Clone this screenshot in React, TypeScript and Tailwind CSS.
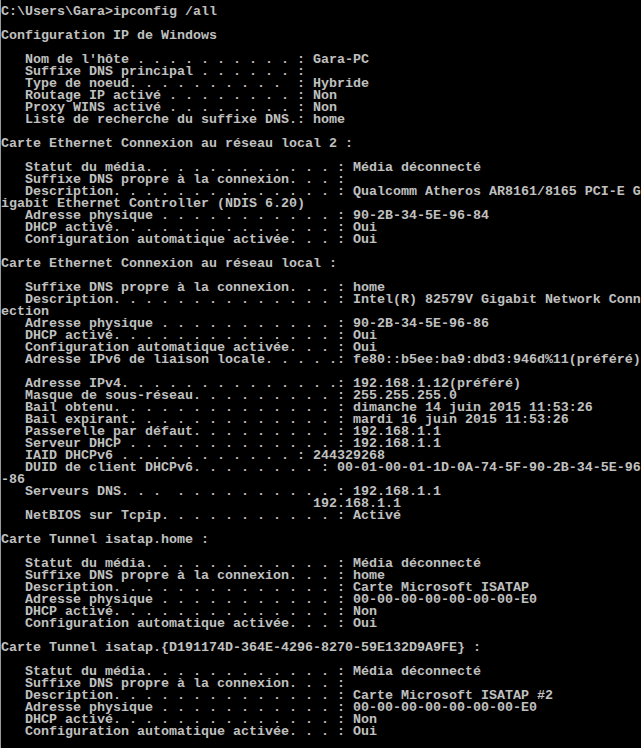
import React from "react";

function lead(label: string, colonCol: number, value: string, dotParity: 0 | 1): string {
  let s = "   " + label;
  while (s.length < colonCol) {
    s += s.length % 2 === dotParity ? "." : " ";
  }
  return s + ": " + value;
}

const S = (l: string, v: string) => lead(l, 42, v, 0);

const lines: string[] = [
  "C:\\Users\\Gara>ipconfig /all",
  "",
  "Configuration IP de Windows",
  "",
  "   Nom de l'hôte . . . . . . . . . . : Gara-PC",
  "   Suffixe DNS principal . . . . . . : ",
  "   Type de noeud. . . . . . . . . .  : Hybride",
  "   Routage IP activé . . . . . . . . : Non",
  "   Proxy WINS activé . . . . . . . . : Non",
  "   Liste de recherche du suffixe DNS.: home",
  "",
  "Carte Ethernet Connexion au réseau local 2 :",
  "",
  S("Statut du média.", "Média déconnecté"),
  S("Suffixe DNS propre à la connexion.", ""),
  S("Description.", "Qualcomm Atheros AR8161/8165 PCI-E G"),
  "igabit Ethernet Controller (NDIS 6.20)",
  S("Adresse physique", "90-2B-34-5E-96-84"),
  S("DHCP activé.", "Oui"),
  S("Configuration automatique activée.", "Oui"),
  "",
  "Carte Ethernet Connexion au réseau local :",
  "",
  S("Suffixe DNS propre à la connexion.", "home"),
  S("Description.", "Intel(R) 82579V Gigabit Network Conn"),
  "ection",
  S("Adresse physique", "90-2B-34-5E-96-86"),
  S("DHCP activé.", "Oui"),
  S("Configuration automatique activée.", "Oui"),
  lead("Adresse IPv6 de liaison locale.", 42, "fe80::b5ee:ba9:dbd3:946d%11(préféré)", 1),
  "",
  lead("Adresse IPv4.", 42, "192.168.1.12(préféré)", 1),
  S("Masque de sous-réseau.", "255.255.255.0"),
  S("Bail obtenu.", "dimanche 14 juin 2015 11:53:26"),
  S("Bail expirant.", "mardi 16 juin 2015 11:53:26"),
  S("Passerelle par défaut.", "192.168.1.1"),
  S("Serveur DHCP", "192.168.1.1"),
  "   IAID DHCPv6 . . . . . . . . . . . : 244329268",
  "   DUID de client DHCPv6. . . . . . . . : 00-01-00-01-1D-0A-74-5F-90-2B-34-5E-96",
  "-86",
  "   Serveurs DNS. . .  . . . . . . . . . . : 192.168.1.1",
  "                                       192.168.1.1",
  S("NetBIOS sur Tcpip.", "Activé"),
  "",
  "Carte Tunnel isatap.home :",
  "",
  S("Statut du média.", "Média déconnecté"),
  S("Suffixe DNS propre à la connexion.", "home"),
  S("Description.", "Carte Microsoft ISATAP"),
  S("Adresse physique", "00-00-00-00-00-00-00-E0"),
  S("DHCP activé.", "Non"),
  S("Configuration automatique activée.", "Oui"),
  "",
  "Carte Tunnel isatap.{D191174D-364E-4296-8270-59E132D9A9FE} :",
  "",
  S("Statut du média.", "Média déconnecté"),
  S("Suffixe DNS propre à la connexion.", ""),
  S("Description.", "Carte Microsoft ISATAP #2"),
  S("Adresse physique", "00-00-00-00-00-00-00-E0"),
  S("DHCP activé.", "Non"),
  S("Configuration automatique activée.", "Oui"),
];

export default function App() {
  return (
    <div className="w-[641px] h-[748px] overflow-hidden bg-black border-l border-[#9a9a9a] pt-[6px]">
      <div className="flex flex-col font-['Liberation_Mono',monospace] font-bold text-[13.33px] leading-[12px] text-[#c0c0c0]">
        {lines.map((l, i) => (
          <div key={i} className="h-[12px] whitespace-pre">
            {l}
          </div>
        ))}
      </div>
    </div>
  );
}
